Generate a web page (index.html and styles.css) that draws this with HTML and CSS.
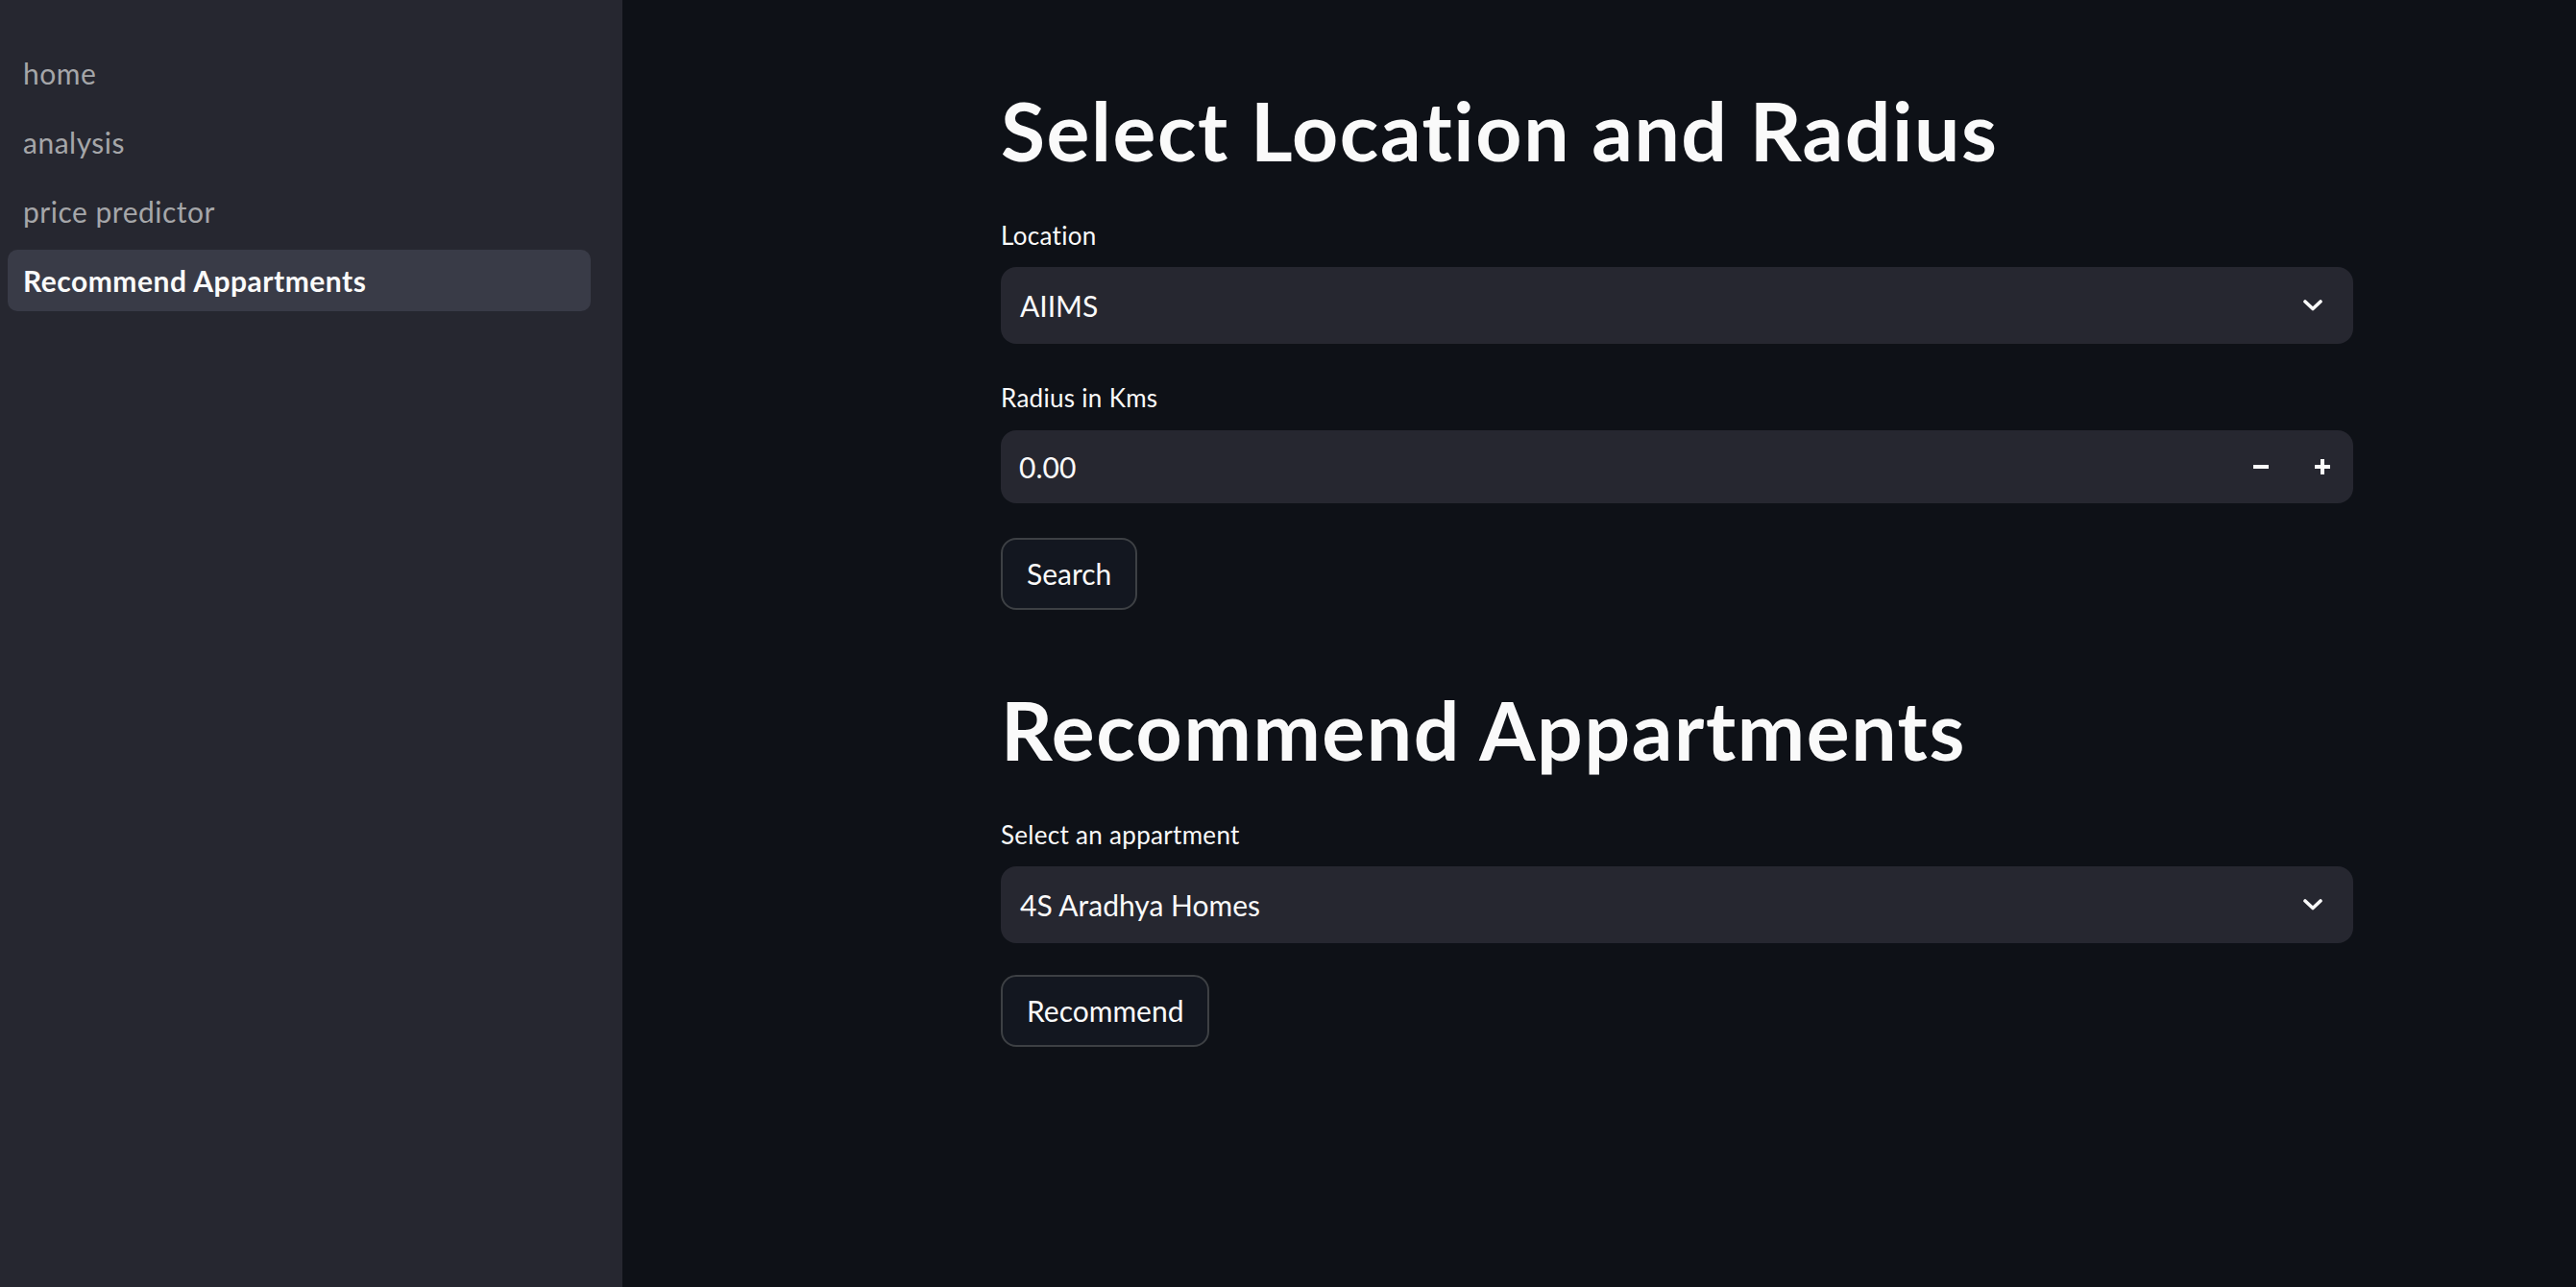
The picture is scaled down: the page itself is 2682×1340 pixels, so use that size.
FILE: index.html
```html
<!DOCTYPE html>
<html lang="en">
<head>
<meta charset="utf-8">
<title>Recommend Appartments</title>
<link rel="stylesheet" href="styles.css">
</head>
<body>
<div class="app">
  <aside class="sidebar">
    <nav class="nav">
      <a class="nav-item">home</a>
      <a class="nav-item">analysis</a>
      <a class="nav-item">price predictor</a>
      <a class="nav-item active">Recommend Appartments</a>
    </nav>
  </aside>
  <main class="main">
    <div class="block">
      <h1 class="title">Select Location and Radius</h1>
      <label class="label l-first">Location</label>
      <div class="select">
        <span class="select-value">AIIMS</span>
        <svg class="chevron" width="20" height="12" viewBox="0 0 20 12"><path d="M2 2 L10 9.5 L18 2" fill="none" stroke="#fafafa" stroke-width="3.6" stroke-linecap="round" stroke-linejoin="round"/></svg>
      </div>
      <label class="label l-next">Radius in Kms</label>
      <div class="number">
        <span class="number-value">0.00</span>
        <span class="step"><svg width="16" height="16" viewBox="0 0 16 16"><rect x="0" y="6" width="16" height="4" fill="#fafafa"/></svg></span>
        <span class="step"><svg width="16" height="16" viewBox="0 0 16 16"><rect x="0" y="6" width="16" height="4" fill="#fafafa"/><rect x="6" y="0" width="4" height="16" fill="#fafafa"/></svg></span>
      </div>
      <button class="btn btn-search">Search</button>
      <h1 class="title t-second">Recommend Appartments</h1>
      <label class="label l-first">Select an appartment</label>
      <div class="select">
        <span class="select-value">4S Aradhya Homes</span>
        <svg class="chevron" width="20" height="12" viewBox="0 0 20 12"><path d="M2 2 L10 9.5 L18 2" fill="none" stroke="#fafafa" stroke-width="3.6" stroke-linecap="round" stroke-linejoin="round"/></svg>
      </div>
      <button class="btn btn-rec">Recommend</button>
    </div>
  </main>
</div>
</body>
</html>
```
FILE: styles.css
```css
* { box-sizing: border-box; }
html, body { margin: 0; padding: 0; height: 100%; }
body {
  background: #0e1117;
  color: #fafafa;
  font-family: Lato, "Liberation Sans", sans-serif;
  font-variant-ligatures: none;
}
.app { display: flex; min-height: 100vh; }
.sidebar {
  width: 648px;
  flex: 0 0 648px;
  background: #262730;
  padding: 44px 33px 0 8px;
}
.nav { display: flex; flex-direction: column; gap: 8px; }
.nav-item {
  display: block;
  height: 64px;
  line-height: 64px;
  padding-left: 16px;
  border-radius: 10px;
  font-size: 30px;
  letter-spacing: 0.5px;
  color: #a5a6a9;
  white-space: nowrap;
}
.nav-item.active {
  background: #393b47;
  color: #fafafa;
  font-weight: 700;
}
.main { flex: 1; padding: 86px 0 0 394px; }
.block { width: 1408px; display: flex; flex-direction: column; align-items: flex-start; }
.title {
  margin: 0;
  font-size: 84px;
  line-height: 100px;
  font-weight: 700;
  letter-spacing: 1.6px;
}
.t-second { margin-top: 75px; }
.label {
  font-size: 26px;
  line-height: 36px;
  letter-spacing: 0.3px;
  margin-bottom: 15px;
}
.l-first { margin-top: 41px; }
.l-next { margin-top: 38px; margin-bottom: 16px; }
.select {
  width: 100%;
  height: 80px;
  background: #262730;
  border-radius: 16px;
  display: flex;
  align-items: center;
  padding: 0 32px 0 20px;
}
.select-value { flex: 1; font-size: 30px; line-height: 80px; }
.chevron { display: block; }
.number {
  width: 100%;
  height: 76px;
  background: #262730;
  border-radius: 16px;
  display: flex;
  align-items: center;
  padding: 0 0 0 19px;
}
.number-value { flex: 1; font-size: 30px; line-height: 76px; }
.step { width: 64px; height: 76px; display: flex; align-items: center; justify-content: center; }
.step svg { display: block; }
.btn {
  font-family: inherit;
  font-variant-ligatures: none;
  font-size: 30px;
  color: #fafafa;
  background: #131720;
  border: 2px solid #3d4044;
  border-radius: 16px;
  height: 75px;
  padding: 0 25px;
  line-height: 71px;
}
.btn-search { margin-top: 36px; }
.btn-rec { margin-top: 33px; }
```
